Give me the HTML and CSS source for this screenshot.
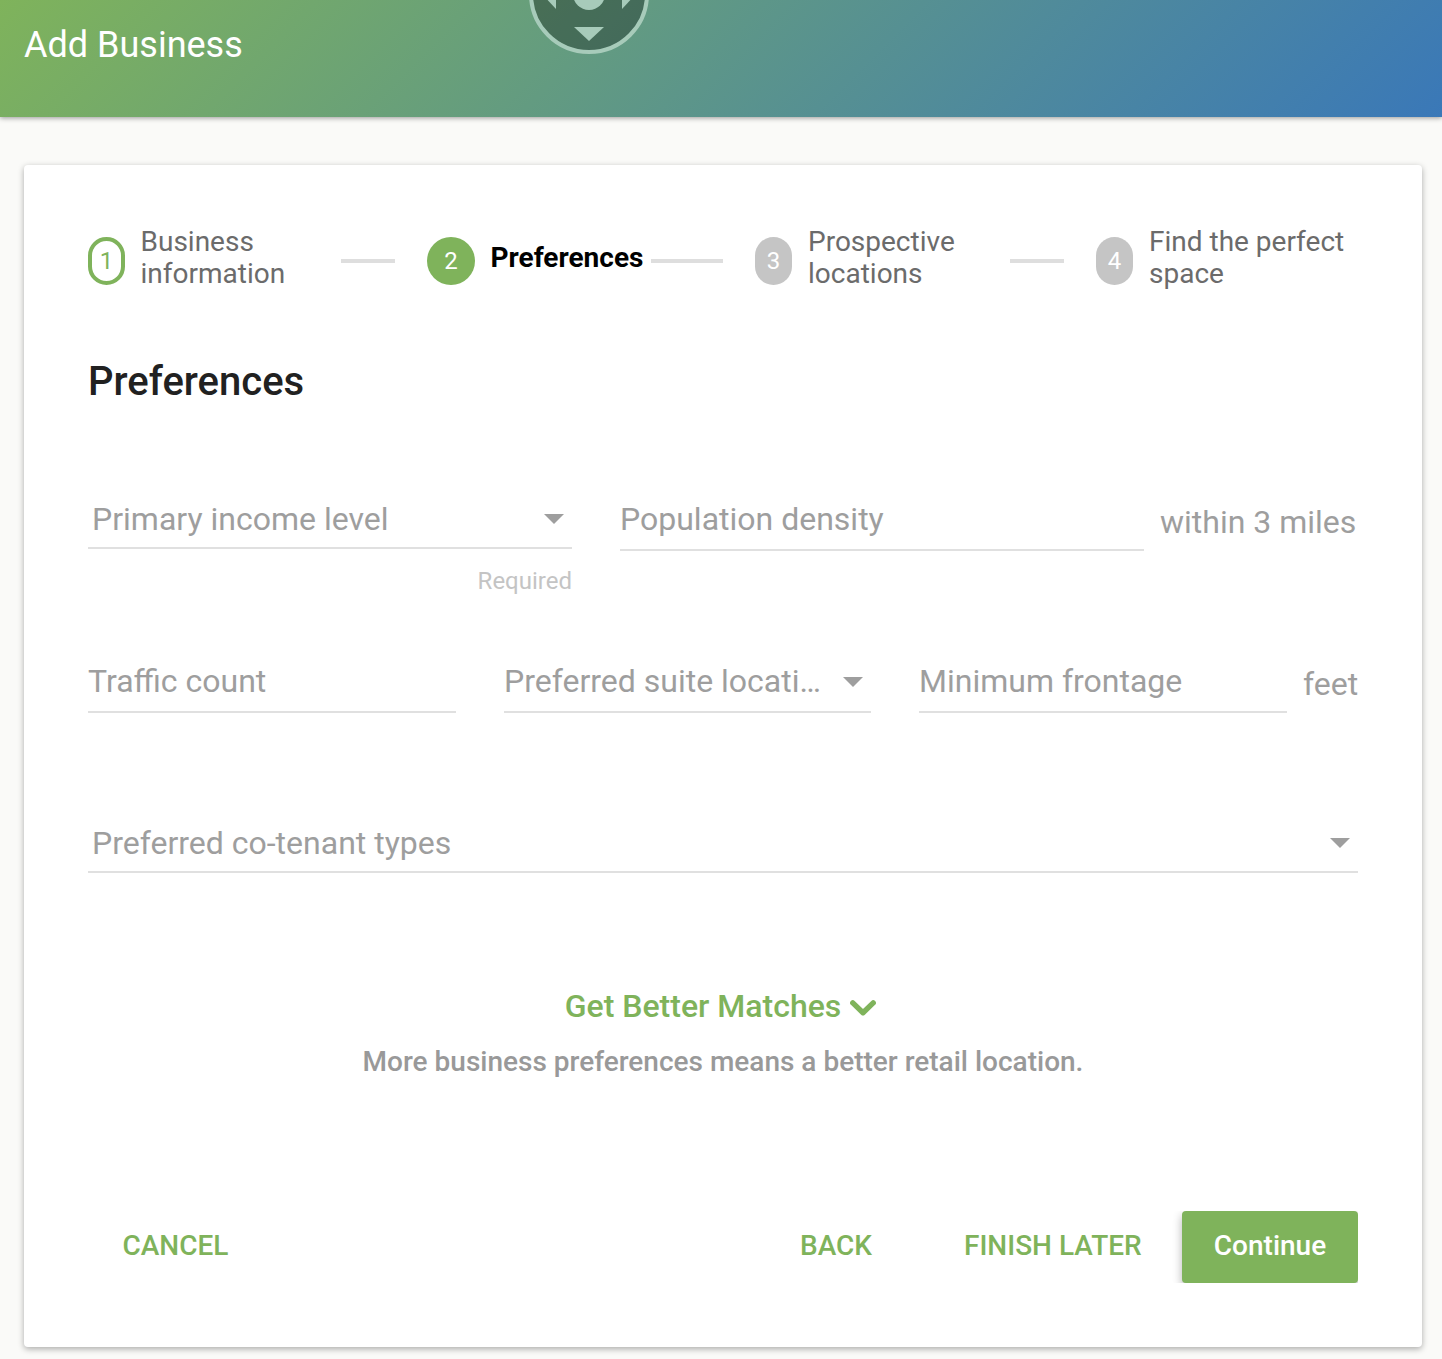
FILE: index.html
```html
<!DOCTYPE html>
<html lang="en">
<head>
<meta charset="utf-8">
<title>Add Business</title>
<link rel="stylesheet" href="styles.css">
</head>
<body>
<header class="toolbar">
  <h1 class="toolbar-title">Add Business</h1>
  <svg class="pan-control" width="120" height="54" viewBox="0 0 120 54" aria-hidden="true">
    <circle cx="60" cy="-6" r="58" fill="#000" fill-opacity=".3"/>
    <g fill="#a7cbba">
      <circle cx="60" cy="-6" r="58" fill="none" stroke="#a7cbba" stroke-width="4"/>
      <circle cx="60" cy="-6" r="16"/>
      <path d="M45 27h30L60 41z"/>
      <path d="M27-21V9L13-6z"/>
      <path d="M93-21V9l14-15z"/>
    </g>
  </svg>
</header>
<main class="card">
  <ol class="stepper">
    <li class="step step-info"><span class="badge done">1</span><span class="step-label">Business<br>information</span></li>
    <li class="bar bar-a"></li>
    <li class="step step-pref"><span class="badge active">2</span><span class="step-label current">Preferences</span></li>
    <li class="bar bar-b"></li>
    <li class="step step-loc"><span class="badge">3</span><span class="step-label">Prospective<br>locations</span></li>
    <li class="bar bar-a"></li>
    <li class="step"><span class="badge">4</span><span class="step-label">Find the perfect<br>space</span></li>
  </ol>
  <h2 class="section-title">Preferences</h2>
  <form class="form">
    <div class="row row-income">
      <div class="stack">
        <div class="field select inset short"><span class="field-text">Primary income level</span><span class="caret"></span></div>
        <div class="hint">Required</div>
      </div>
      <div class="with-unit">
        <div class="field"><span class="field-text">Population density</span></div>
        <span class="unit">within 3 miles</span>
      </div>
    </div>
    <div class="row row-traffic">
      <div class="field"><span class="field-text">Traffic count</span></div>
      <div class="field select"><span class="field-text">Preferred suite locati…</span><span class="caret low"></span></div>
      <div class="with-unit">
        <div class="field"><span class="field-text">Minimum frontage</span></div>
        <span class="unit">feet</span>
      </div>
    </div>
    <div class="field select inset tenants"><span class="field-text">Preferred co-tenant types</span><span class="caret"></span></div>
  </form>
  <section class="more">
    <a class="more-link">Get Better Matches
      <svg class="chevron" width="26" height="16" viewBox="0 0 26 16" aria-hidden="true"><path d="M2.8 2.9 13 12.7 23.2 2.9" fill="none" stroke="#7fb35b" stroke-width="5.4" stroke-linecap="round" stroke-linejoin="round"/></svg>
    </a>
    <p class="more-text">More business preferences means a better retail location.</p>
  </section>
  <footer class="actions">
    <button class="btn cancel">CANCEL</button>
    <button class="btn back">BACK</button>
    <button class="btn later">FINISH LATER</button>
    <button class="btn primary">Continue</button>
  </footer>
</main>
</body>
</html>
```

FILE: styles.css
```css
* { box-sizing: border-box; }
body {
  margin: 0;
  height: 1359px;
  overflow: hidden;
  background: #fafaf8;
  font-family: Roboto, "Liberation Sans", sans-serif;
}
.toolbar {
  position: relative;
  height: 117px;
  padding: 24px;
  background: linear-gradient(135deg, #7fb35b 0%, #3a78b8 100%);
  box-shadow: 0 1px 5px rgba(0,0,0,.4);
}
.toolbar-title {
  margin: 0;
  font-size: 36px;
  line-height: 42px;
  font-weight: 400;
  color: #fff;
}
.pan-control { position: absolute; left: 529px; top: 0; }
.card {
  width: 1398px;
  height: 1182px;
  margin: 48px 0 0 24px;
  padding: 60px 64px 64px;
  background: #fff;
  border-radius: 4px;
  box-shadow: 0 2px 6px rgba(0,0,0,.32);
}
.stepper {
  display: flex;
  align-items: center;
  height: 66px;
  margin: 0;
  padding: 0;
  list-style: none;
}
.step { display: flex; align-items: center; gap: 16px; }
.step-info { width: 253px; gap: 15.5px; }
.step-pref { width: 224px; gap: 15.5px; }
.step-loc { width: 255px; }
.badge {
  display: flex;
  align-items: center;
  justify-content: center;
  flex: none;
  width: 37px;
  height: 48px;
  margin-top: 6px;
  border-radius: 24px;
  background: #c5c5c5;
  color: #fff;
  font-size: 24px;
}
.badge.done { border: 4px solid #7fb35b; background: #fff; color: #7fb35b; }
.badge.active { width: 48px; background: #7fb35b; }
.step-label {
  font-size: 28px;
  line-height: 32px;
  color: #6b6b6b;
  white-space: nowrap;
}
.step-label.current { color: #000; font-weight: 700; }
.bar { height: 4px; margin-top: 6px; background: #dedede; }
.bar-a { width: 54px; margin-right: 32px; }
.bar-b { width: 72px; margin-right: 32px; }
.section-title {
  margin: 68px 0 0;
  font-size: 40px;
  line-height: 46px;
  font-weight: 500;
  color: #212121;
}
.form { color: #9e9e9e; font-size: 32px; }
.row { display: flex; gap: 48px; }
.row-income { height: 162px; margin-top: 94px; }
.row-traffic { height: 162px; }
.stack { width: 484px; }
.field {
  display: flex;
  align-items: flex-start;
  justify-content: space-between;
  height: 52px;
  border-bottom: 2px solid #e0e0e0;
}
.field.short { height: 50px; }
.field-text { line-height: 40px; white-space: nowrap; }
.inset { padding-left: 4px; }
.caret {
  width: 20px;
  height: 10px;
  margin: 15px 8px 0 0;
  background: #9e9e9e;
  clip-path: polygon(0 0, 100% 0, 50% 100%);
}
.caret.low { margin-top: 16px; }
.hint { margin-top: 18px; font-size: 24px; line-height: 28px; text-align: right; color: #c4c4c4; }
.with-unit { display: flex; gap: 16px; }
.with-unit .field { flex: none; width: 524px; }
.unit { margin-top: 3px; line-height: 40px; white-space: nowrap; }
.row-traffic > .field { width: 368px; flex: none; }
.row-traffic > .field.select { width: 367px; }
.row-traffic .with-unit .field { width: 368px; }
.tenants { height: 50px; }
.more { display: flex; flex-direction: column; align-items: center; margin-top: 113px; }
.more-link {
  display: flex;
  align-items: center;
  gap: 9px;
  margin-right: 5px;
  font-size: 32px;
  line-height: 40px;
  font-weight: 500;
  color: #7fb35b;
}
.chevron { margin-top: 3px; }
.more-text { margin: 20px 0 0; font-size: 28px; line-height: 32px; font-weight: 500; color: #999; }
.actions { display: flex; align-items: center; height: 72px; margin-top: 133px; }
.btn {
  padding: 0 0 2px;
  border: 0;
  background: none;
  color: #7fb35b;
  font: 500 28px/36px Roboto, "Liberation Sans", sans-serif;
  text-align: left;
  white-space: nowrap;
}
.cancel { width: 677px; padding-left: 34.5px; margin-right: 35px; }
.back { width: 164px; }
.later { width: 218px; }
.primary {
  width: 176px;
  height: 72px;
  border-radius: 4px;
  background: #7fb35b;
  color: #fff;
  text-align: center;
  box-shadow: 0 4px 10px rgba(0,0,0,.3);
  clip-path: inset(0 0 0 -10px);
}
```
